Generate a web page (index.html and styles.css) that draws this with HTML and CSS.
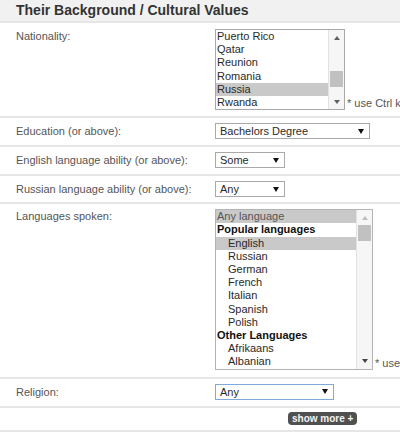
FILE: index.html
```html
<!DOCTYPE html>
<html>
<head>
<meta charset="utf-8">
<title>Their Background / Cultural Values</title>
<link rel="stylesheet" href="styles.css">
</head>
<body>
<div class="panel">
  <div class="head">Their Background / Cultural Values</div>

  <div class="row r-list r-nat">
    <div class="lbl">Nationality:</div>
    <div class="field">
      <div class="listbox lb-nat">
        <div class="opts">
          <div class="opt">Puerto Rico</div>
          <div class="opt">Qatar</div>
          <div class="opt">Reunion</div>
          <div class="opt">Romania</div>
          <div class="opt sel">Russia</div>
          <div class="opt">Rwanda</div>
        </div>
        <div class="sbar">
          <div class="sbtn"><span class="tri up"></span></div>
          <div class="track"><div class="thumb th-nat"></div></div>
          <div class="sbtn"><span class="tri down"></span></div>
        </div>
      </div>
      <span class="note">* use Ctrl key to select multiple</span>
    </div>
  </div>

  <div class="row">
    <div class="lbl">Education (or above):</div>
    <div class="field">
      <div class="dd w-edu"><span>Bachelors Degree</span><span class="caret"></span></div>
    </div>
  </div>

  <div class="row">
    <div class="lbl">English language ability (or above):</div>
    <div class="field">
      <div class="dd w-sm"><span>Some</span><span class="caret"></span></div>
    </div>
  </div>

  <div class="row r-rus">
    <div class="lbl">Russian language ability (or above):</div>
    <div class="field">
      <div class="dd w-sm"><span>Any</span><span class="caret"></span></div>
    </div>
  </div>

  <div class="row r-list r-lang">
    <div class="lbl">Languages spoken:</div>
    <div class="field">
      <div class="listbox lb-lang">
        <div class="opts">
          <div class="opt sel dim">Any language</div>
          <div class="opt grp">Popular languages</div>
          <div class="opt sub sel">English</div>
          <div class="opt sub">Russian</div>
          <div class="opt sub">German</div>
          <div class="opt sub">French</div>
          <div class="opt sub">Italian</div>
          <div class="opt sub">Spanish</div>
          <div class="opt sub">Polish</div>
          <div class="opt grp">Other Languages</div>
          <div class="opt sub">Afrikaans</div>
          <div class="opt sub">Albanian</div>
        </div>
        <div class="sbar">
          <div class="sbtn"><span class="tri up off"></span></div>
          <div class="track"><div class="thumb"></div></div>
          <div class="sbtn"><span class="tri down dark"></span></div>
        </div>
      </div>
      <span class="note">* use Ctrl key to select multiple</span>
    </div>
  </div>

  <div class="row">
    <div class="lbl">Religion:</div>
    <div class="field">
      <div class="dd w-rel"><span>Any</span><span class="caret"></span></div>
    </div>
  </div>

  <div class="more-row">
    <span class="more">show more +</span>
  </div>
</div>
</body>
</html>
```

FILE: styles.css
```css
html, body {
  margin: 0;
  padding: 0;
  background: #fff;
}
body {
  font-family: Arial, "Liberation Sans", sans-serif;
  font-size: 11px;
  color: #555;
  overflow: hidden;
}
.panel {
  width: 400px;
}
.head {
  background: #f1f1f1;
  color: #333;
  font-weight: bold;
  font-size: 14px;
  line-height: 18px;
  padding: 1px 16px 2px;
  border-bottom: 2px solid #e6e6e6;
  white-space: nowrap;
}
.row {
  display: grid;
  grid-template-columns: 199px minmax(0, 1fr);
  padding: 5px 0 6px 16px;
  border-bottom: 2px solid #e6e6e6;
}
.r-nat {
  padding-top: 6px;
  padding-bottom: 6px;
}
.r-rus {
  padding-bottom: 5px;
}
.r-lang {
  padding-top: 5px;
  padding-bottom: 7px;
}
.lbl {
  line-height: 16px;
  white-space: nowrap;
}
.r-list .lbl {
  line-height: 13.2px;
  padding-top: 1px;
}
.field {
  display: flex;
  align-items: flex-end;
  gap: 2px;
  overflow: hidden;
  white-space: nowrap;
}

/* list boxes */
.listbox {
  flex: none;
  display: flex;
  box-sizing: border-box;
  border: 1px solid #a8a8a8;
  background: #fff;
  color: #2a2a2a;
}
.lb-nat {
  width: 130px;
  height: 81.2px;
}
.lb-lang {
  width: 158px;
  height: 160.4px;
  border-color: #b4b4b4;
}
.opts {
  flex: 1;
  overflow: hidden;
}
.opt {
  line-height: 13.2px;
  padding-left: 1px;
  white-space: nowrap;
}
.opt.sel {
  background: #c9c9c9;
}
.opt.dim {
  color: #555;
}
.opt.grp {
  font-weight: bold;
  color: #111;
}
.opt.sub {
  padding-left: 12px;
}
.sbar {
  flex: none;
  width: 15px;
  display: flex;
  flex-direction: column;
  background: #f6f6f6;
  border-left: 1px solid #e2e2e2;
}
.sbtn {
  height: 15px;
  display: flex;
  align-items: center;
  justify-content: center;
}
.track {
  flex: 1;
}
.thumb {
  height: 16px;
  margin: 0 1px;
  background: #c1c1c1;
}
.th-nat {
  margin-top: 26px;
}
.tri {
  width: 0;
  height: 0;
  border-left: 3px solid transparent;
  border-right: 3px solid transparent;
}
.tri.up {
  border-bottom: 4px solid #606060;
}
.tri.down {
  border-top: 4px solid #606060;
}
.tri.up.off {
  border-bottom-color: #bdbdbd;
}
.tri.down.dark {
  border-top-color: #444;
}
.note {
  color: #555;
  line-height: 13px;
}

/* drop-downs */
.dd {
  box-sizing: border-box;
  height: 16px;
  display: flex;
  align-items: center;
  justify-content: space-between;
  border: 1px solid #a9a9a9;
  background: #fff;
  color: #2a2a2a;
  line-height: 14px;
  padding: 0 5px 0 4px;
}
.w-edu {
  width: 155px;
}
.w-sm {
  width: 70px;
}
.w-rel {
  width: 119px;
  border-color: #7ea9d8;
}
.caret {
  width: 0;
  height: 0;
  border-left: 3px solid transparent;
  border-right: 3px solid transparent;
  border-top: 5px solid #111;
}

/* show more */
.more-row {
  padding: 4px 0 5px 288px;
  border-bottom: 2px solid #e6e6e6;
  line-height: 13px;
}
.more {
  display: inline-block;
  height: 13px;
  line-height: 13px;
  padding: 0 4px;
  border-radius: 4px;
  background: #505050;
  color: #f4f4f4;
  font-weight: bold;
  font-size: 10px;
  vertical-align: top;
}
```
